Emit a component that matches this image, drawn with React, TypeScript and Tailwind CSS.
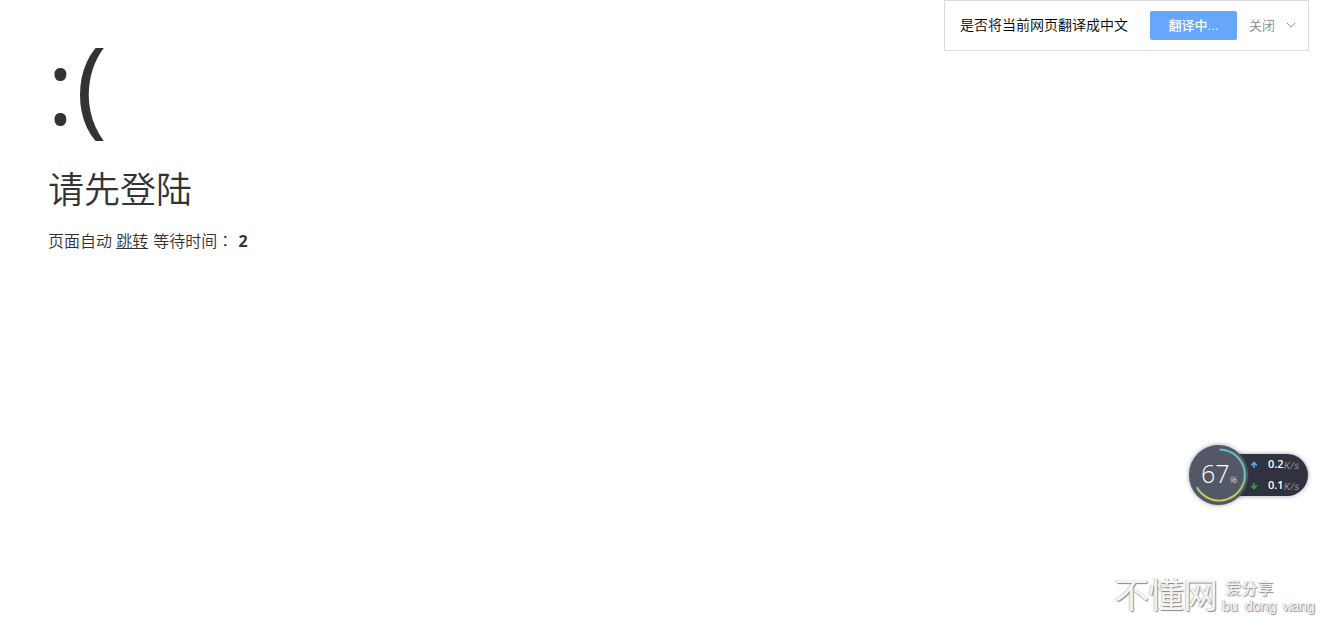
import { ArrowDown, ArrowUp } from "lucide-react";

const speeds = [
  { key: "up", value: "0.2", icon: ArrowUp, color: "text-[#45b5ea]" },
  { key: "down", value: "0.1", icon: ArrowDown, color: "text-[#2fa836]" },
];

function TranslateBar() {
  return (
    <div className="absolute top-0 right-4 w-[365px] h-[51px] flex items-center border border-[#dcdcdc] bg-white pl-[15px] pr-3 font-['Liberation_Sans','Noto_Sans_CJK_SC',sans-serif]">
      <span className="w-[190px] text-[14px] font-[350] text-black whitespace-nowrap">是否将当前网页翻译成中文</span>
      <button className="w-[87px] h-[29px] rounded-[2px] bg-[#66a6fb] text-[13px] font-medium text-white whitespace-nowrap">
        翻译中...
      </button>
      <button className="ml-3 text-[13px] font-[350] text-[#888] whitespace-nowrap">关闭</button>
      <svg className="ml-auto mb-0.5 w-2.5 h-1.5 text-[#999]" viewBox="0 0 10 6" fill="none" stroke="currentColor">
        <path d="M1 1l4 4 4-4" />
      </svg>
    </div>
  );
}

function SpeedBall() {
  return (
    <div className="absolute left-[1189px] top-[445px] w-[119px] h-[60px] flex items-center font-['Open_Sans',sans-serif]">
      <div className="relative z-10 w-[59px] h-[60px] shrink-0 rounded-full bg-[#535766] shadow-[0_0_4px_rgba(60,60,90,0.5)]">
        <svg className="w-full h-full" viewBox="0 0 60 61" fill="none">
          <defs>
            <linearGradient id="ring" x1="0" y1="0" x2="0" y2="1">
              <stop offset="0" stopColor="#55c5d4" />
              <stop offset="0.6" stopColor="#72cba7" />
              <stop offset="1" stopColor="#d3d64a" />
            </linearGradient>
          </defs>
          <path d="M31 4.5 A26 26 0 1 1 8 43" stroke="url(#ring)" strokeWidth="2" />
        </svg>
        <div className="absolute inset-0 flex items-center pl-3 pb-0.5 text-white">
          <span className="text-[25px] font-light">67</span>
          <span className="mt-3 text-[9px] font-light -skew-x-12">%</span>
        </div>
      </div>
      <div className="-ml-5 w-20 h-[42px] flex flex-col rounded-r-full bg-[#30333f] pl-[22px] shadow-[0_0_4px_rgba(60,60,90,0.5)]">
        {speeds.map(({ key, value, icon: Icon, color }) => (
          <div key={key} className="h-[21px] flex items-center">
            <Icon className={`w-2 h-2 ${color}`} strokeWidth={5} />
            <span className="ml-[10px] text-[11px] font-semibold text-white">{value}</span>
            <span className="mt-px text-[10px] tracking-[0.4px] -skew-x-12 text-[#9a9ca5]">K/s</span>
          </div>
        ))}
      </div>
    </div>
  );
}

function Watermark() {
  return (
    <div className="absolute left-[1114px] top-[571px] flex text-[#f4f4f4] font-['Noto_Sans_CJK_SC',sans-serif] [text-shadow:1px_1px_1px_#888,-1px_0_1px_#ccc]">
      <span className="text-[35px] leading-[44px] tracking-[-0.5px]">不懂网</span>
      <div className="ml-1 flex flex-col whitespace-nowrap">
        <span className="pl-1 pt-1.5 text-[16px] leading-[20px]">爱分享</span>
        <span className="text-[15px] leading-[21px] font-['Liberation_Mono',monospace] tracking-[-1.3px]">bu dong wang</span>
      </div>
    </div>
  );
}

export default function App() {
  return (
    <div className="relative h-[628px] overflow-hidden bg-white text-[#333] font-['Open_Sans','Noto_Sans_CJK_SC',sans-serif]">
      <main className="px-12 pt-[23px]">
        <h1 className="text-[106px] leading-[120px]">
          <span className="relative top-px -ml-px mr-0.5 text-[102px]">:</span>(
        </h1>
        <p className="pt-3 text-[36px] leading-[65px] font-[350]">请先登陆</p>
        <p className="pt-1.5 text-[16px] leading-6 font-[350]">
          页面自动 <a className="mr-px underline" href="#">跳转</a> 等待时间
          <span className="mr-px font-['Noto_Sans_CJK_TC',sans-serif]">：</span> <b className="font-bold">2</b>
        </p>
      </main>
      <TranslateBar />
      <SpeedBall />
      <Watermark />
    </div>
  );
}
